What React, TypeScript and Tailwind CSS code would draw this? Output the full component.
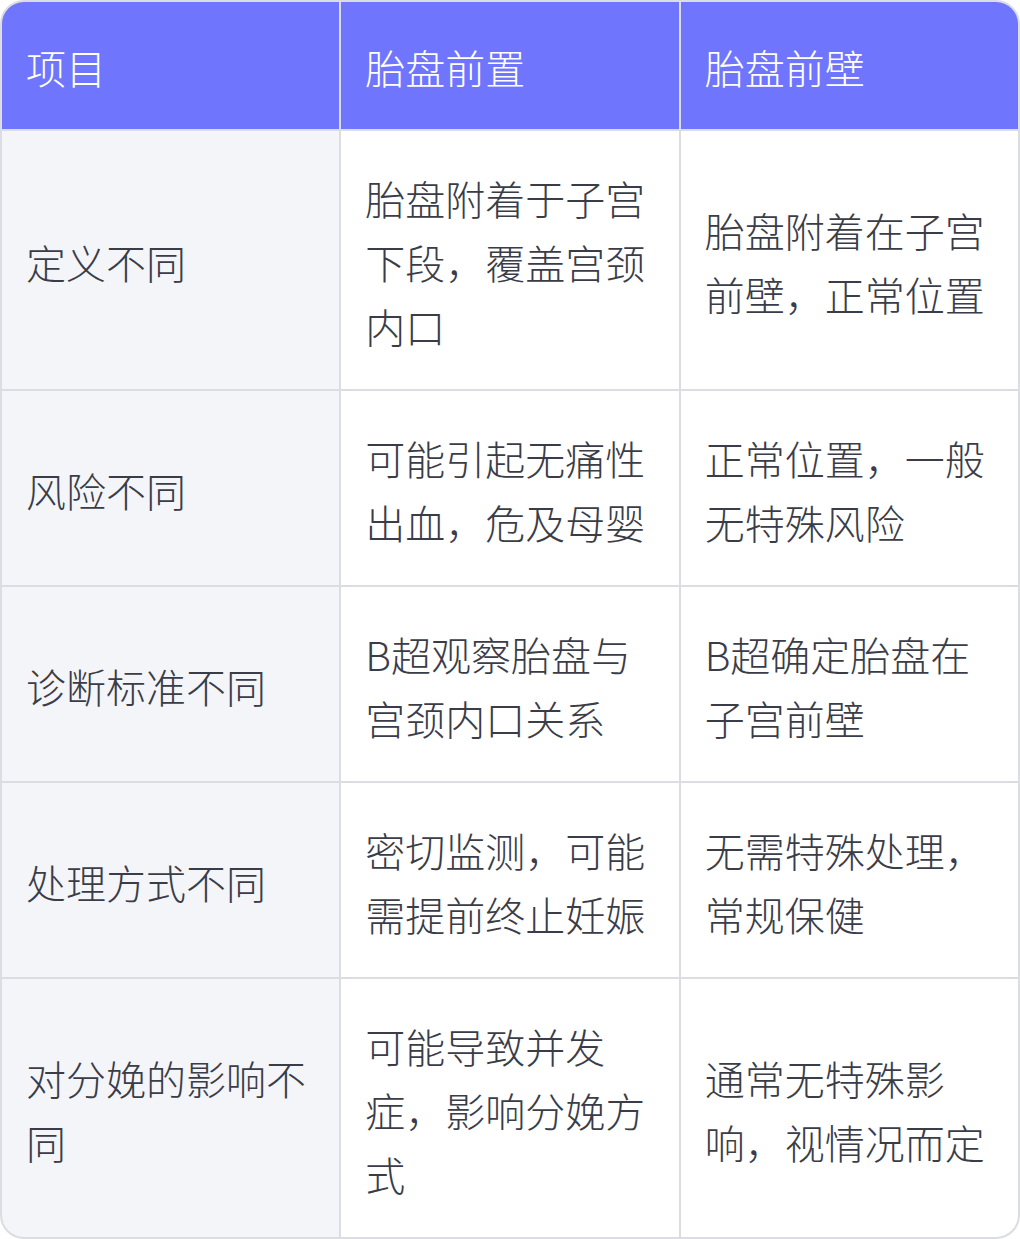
import React from "react";

const rows: [string, string, string][] = [
  ["定义不同", "胎盘附着于子宫下段，覆盖宫颈内口", "胎盘附着在子宫前壁，正常位置"],
  ["风险不同", "可能引起无痛性出血，危及母婴", "正常位置，一般无特殊风险"],
  ["诊断标准不同", "B超观察胎盘与宫颈内口关系", "B超确定胎盘在子宫前壁"],
  ["处理方式不同", "密切监测，可能需提前终止妊娠", "无需特殊处理，常规保健"],
  ["对分娩的影响不同", "可能导致并发症，影响分娩方式", "通常无特殊影响，视情况而定"],
];

const font = { fontFamily: '"Noto Sans CJK SC", "Noto Sans", sans-serif' };

export default function App() {
  return (
    <div className="w-[1020px] h-[1239px] bg-white" style={font}>
      <div className="rounded-3xl overflow-hidden border-2 border-[#dcdde2] bg-[#dcdde2] grid grid-cols-3 gap-[2px] text-[40px] leading-[64px] font-light">
        {["项目", "胎盘前置", "胎盘前壁"].map((h) => (
          <div key={h} className="bg-[#7075fe] text-white px-6 pt-[33px] pb-[30px] flex items-center">
            {h}
          </div>
        ))}
        {rows.map((r) => (
          <React.Fragment key={r[0]}>
            <div className="bg-[#f4f5f9] text-[#3a3d47] px-6 pt-[35px] pb-[31px] flex items-center">{r[0]}</div>
            <div className="bg-white text-[#3a3d47] px-6 pt-[35px] pb-[31px] flex items-center">{r[1]}</div>
            <div className="bg-white text-[#3a3d47] px-6 pt-[35px] pb-[31px] flex items-center">{r[2]}</div>
          </React.Fragment>
        ))}
      </div>
    </div>
  );
}
